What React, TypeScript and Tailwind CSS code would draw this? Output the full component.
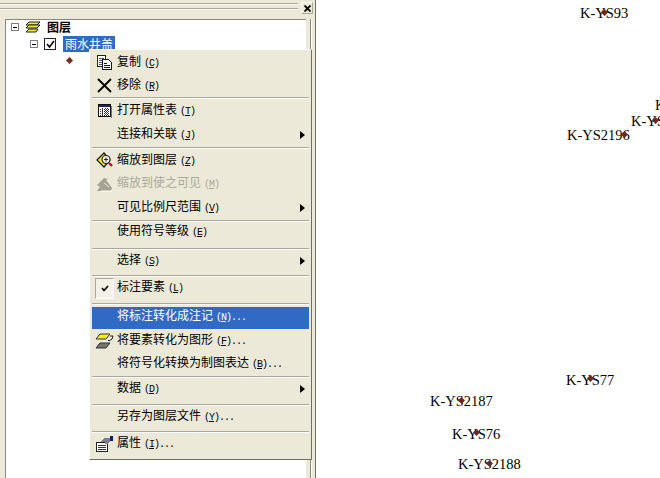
import React from 'react';

type Row = {
  label?: string;
  k?: string;
  dots?: boolean;
  size?: string;
  arrow?: boolean;
  icon?: React.ReactNode;
  disabled?: boolean;
  active?: boolean;
  checked?: boolean;
  sep?: boolean;
};

const CopyIcon = () => (
  <svg width="16" height="16" viewBox="0 0 16 16" shapeRendering="crispEdges">
    <path d="M0.5 0.5h8v4h-3v7h-5z" fill="#fff" stroke="#222" />
    <path d="M2 3h5M2 5h3M2 7h3M2 9h3" stroke="#555" />
    <path d="M5.5 4.5h6l3 3v7h-9z" fill="#fff" stroke="#10105a" />
    <path d="M7 8h3M7 10h6M7 12h6" stroke="#10105a" />
  </svg>
);

const RemoveIcon = () => (
  <svg width="15" height="15" viewBox="0 0 15 15">
    <path d="M1 1l13 13M14 1L1 14" stroke="#000" strokeWidth="1.8" />
  </svg>
);

const TableIcon = () => (
  <svg width="14" height="14" viewBox="0 0 14 14" shapeRendering="crispEdges">
    <rect x="0.5" y="0.5" width="12" height="12" fill="#fff" stroke="#111" />
    <rect x="1" y="1" width="11" height="2" fill="#20207a" />
    <path d="M2 5h9M2 7h9M2 9h9M2 11h9M4.5 4v8M7 4v8M9.5 4v8" stroke="#333" strokeDasharray="1 1" />
    <path d="M13.5 2v12H2" fill="none" stroke="#777" />
  </svg>
);

const ZoomIcon = () => (
  <svg width="18" height="17" viewBox="0 0 18 17">
    <path d="M8 1L1 8l7 7 6-7z" fill="#f8ec20" stroke="#111" strokeWidth="1.2" />
    <circle cx="10" cy="7.5" r="4" fill="#f4f4ea" stroke="#222" strokeWidth="1.2" />
    <path d="M8 7.5h4M10 5.5v4" stroke="#222" />
    <path d="M13 11l3 3" stroke="#b81010" strokeWidth="2.4" />
  </svg>
);

const ZoomDisabledIcon = () => (
  <svg width="17" height="15" viewBox="0 0 17 15">
    <path d="M8 1L1 8l3 2-3 4h14l1-3-6-8 2-1z" fill="#a5a294" />
    <path d="M8 6l5 4" stroke="#ece9d8" />
    <path d="M5 14h11" stroke="#fff" />
  </svg>
);

const ConvertIcon = () => (
  <svg width="19" height="16" viewBox="0 0 19 16">
    <path d="M5 1h10l-4 5H1z" fill="#f5ea2a" stroke="#333" />
    <path d="M5 10h10l-4 5H1z" fill="#77766c" stroke="#333" />
    <path d="M15 3h3l-1 3-3 2M13 7l1 1" fill="none" stroke="#222" />
  </svg>
);

const PropsIcon = () => (
  <svg width="17" height="16" viewBox="0 0 17 16" shapeRendering="crispEdges">
    <path d="M0.5 6.5h11v9h-11z" fill="#fff" stroke="#222" />
    <path d="M2 9h8M2 11h8M2 13h8" stroke="#333" />
    <path d="M4 6l5-4h5v4l-3 2H9V6z" fill="#7d7d86" />
    <rect x="14" y="0" width="3" height="5" fill="#16167a" />
  </svg>
);

const menu: Row[] = [
  { label: '复制', k: 'C', icon: <CopyIcon />, size: 'h-[23px]' },
  { label: '移除', k: 'R', icon: <RemoveIcon />, size: 'h-[23px]' },
  { sep: true },
  { label: '打开属性表', k: 'T', icon: <TableIcon />, size: 'h-[23px]' },
  { label: '连接和关联', k: 'J', arrow: true, size: 'h-[25px]' },
  { sep: true },
  { label: '缩放到图层', k: 'Z', icon: <ZoomIcon />, size: 'h-[23px]' },
  { label: '缩放到使之可见', k: 'M', icon: <ZoomDisabledIcon />, disabled: true, size: 'h-[24px]' },
  { label: '可见比例尺范围', k: 'V', arrow: true, size: 'h-[24px] pb-[1px]' },
  { sep: true },
  { label: '使用符号等级', k: 'E', size: 'h-[26px] pb-[6px]' },
  { sep: true },
  { label: '选择', k: 'S', arrow: true, size: 'h-[25px] pb-[4px]' },
  { sep: true },
  { label: '标注要素', k: 'L', checked: true, size: 'h-[26px] pb-[4px]' },
  { sep: true },
  { label: '将标注转化成注记', k: 'N', dots: true, active: true, size: 'h-[22px] mt-[2px] pb-[3px]' },
  { label: '将要素转化为图形', k: 'F', dots: true, icon: <ConvertIcon />, size: 'h-[24px]' },
  { label: '将符号化转换为制图表达', k: 'B', dots: true, size: 'h-[23px] pb-[1px]' },
  { sep: true },
  { label: '数据', k: 'D', arrow: true, size: 'h-[26px] pb-[4px]' },
  { sep: true },
  { label: '另存为图层文件', k: 'Y', dots: true, size: 'h-[25px] pb-[3px]' },
  { sep: true },
  { label: '属性', k: 'I', dots: true, icon: <PropsIcon />, size: 'h-[27px] pb-[5px]' },
];

const labels = [
  { text: 'K-YS93', x: 'left-[264px] top-[6px]', dot: 'left-[286px] top-[10px]' },
  { text: 'K-YS2196', x: 'left-[251px] top-[128px]', dot: 'left-[306px] top-[132px]' },
  { text: 'K-YS2', x: 'left-[315px] top-[114px]', dot: 'left-[337px] top-[118px]' },
  { text: 'K', x: 'left-[339px] top-[98px]', dot: 'hidden' },
  { text: 'K-YS77', x: 'left-[250px] top-[373px]', dot: 'left-[272px] top-[376px]' },
  { text: 'K-YS2187', x: 'left-[114px] top-[394px]', dot: 'left-[143px] top-[398px]' },
  { text: 'K-YS76', x: 'left-[136px] top-[427px]', dot: 'left-[158px] top-[430px]' },
  { text: 'K-YS2188', x: 'left-[142px] top-[457px]', dot: 'left-[171px] top-[461px]' },
];

function MenuRow({ row }: { row: Row }) {
  if (row.sep) {
    return <div className="h-[2px] mx-[2px] border-t border-b border-t-[#aca899] border-b-white" />;
  }
  const tone = row.active ? 'bg-[#316ac5] text-white' : row.disabled ? 'text-[#aca899]' : 'text-black';
  return (
    <div className={`flex items-center mx-[2px] ${row.size} ${tone}`}>
      <div className="w-[25px] shrink-0 flex items-center justify-center">
        {row.checked ? (
          <div className="w-[19px] h-[21px] flex items-center justify-center bg-[#f4f2e8] border border-t-[#aca899] border-l-[#aca899] border-r-white border-b-white">
            <svg width="8" height="7" viewBox="0 0 8 7">
              <path d="M1 3l2 2.5L7 1" fill="none" stroke="#000" strokeWidth="1.6" />
            </svg>
          </div>
        ) : (
          row.icon
        )}
      </div>
      <span className="mb-[2px] whitespace-nowrap">
        {row.label}
        <span className="ml-[3px] font-['Liberation_Mono',monospace] text-[10px] tracking-[-1px]">
          (<u>{row.k}</u>)
        </span>
        {row.dots && <span className="font-['Liberation_Mono',monospace] text-[10px] tracking-[-1px]">...</span>}
      </span>
      {row.arrow && (
        <div className="ml-auto mr-[4px] w-0 h-0 border-y-[4.5px] border-y-transparent border-l-[5px] border-l-black" />
      )}
    </div>
  );
}

export default function App() {
  return (
    <div className="relative flex w-[660px] h-[478px] overflow-hidden bg-white text-[12px] leading-none font-['Noto_Sans_CJK_SC','Liberation_Sans',sans-serif]">
      <div className="relative w-[316px] shrink-0 flex flex-col bg-[#ece9d8] border-r border-r-[#6f6d64]">
        <div className="h-[19px] shrink-0 flex items-start">
          <div className="w-[298px] mt-[3px] h-[7px] flex flex-col justify-between">
            <div className="h-[2px] border-t border-t-[#aca899] bg-[#f8f7f0]" />
            <div className="h-[2px] border-t border-t-[#aca899] bg-[#f8f7f0]" />
          </div>
          <div className="ml-[3px] mt-[2px] w-[12px] h-[12px] flex items-center justify-center border border-t-white border-l-white border-r-[#aca899] border-b-[#aca899] bg-[#ece9d8]">
            <svg width="7" height="7" viewBox="0 0 7 7">
              <path d="M0.5 0.5l6 6M6.5 0.5l-6 6" stroke="#000" strokeWidth="1.8" />
            </svg>
          </div>
        </div>
        <div className="flex flex-1 min-h-0">
          <div className="ml-[5px] w-[301px] bg-white border-t border-l border-t-[#8a887c] border-l-[#8a887c]">
            <div className="flex items-center h-[14px] ml-[5px]">
              <div className="w-[8px] h-[8px] border border-[#808080] flex items-center justify-center">
                <div className="w-[4px] h-px bg-black" />
              </div>
              <svg className="ml-[6px]" width="16" height="13" viewBox="0 0 16 13">
                <path d="M4 1h11l-3 3H1z" fill="#f5e82a" stroke="#222" />
                <path d="M4 4h11l-3 3H1z" fill="#f5e82a" stroke="#222" />
                <path d="M4 8h9l-2 3H1z" fill="#f5e82a" stroke="#222" />
              </svg>
              <span className="ml-[6px] font-bold text-black">图层</span>
            </div>
            <div className="flex items-center h-[16px] mt-[2px] ml-[24px]">
              <div className="w-[8px] h-[8px] border border-[#808080] flex items-center justify-center">
                <div className="w-[4px] h-px bg-black" />
              </div>
              <div className="ml-[6px] w-[12px] h-[12px] border border-[#222] flex items-center justify-center">
                <svg width="9" height="9" viewBox="0 0 9 9">
                  <path d="M1 4l2.5 3L8 1" fill="none" stroke="#000" strokeWidth="1.6" />
                </svg>
              </div>
              <span className="ml-[7px] h-[16px] px-[2px] flex items-center bg-[#316ac5] text-white">雨水井盖</span>
            </div>
            <div className="ml-[61px] mt-[6px] w-[5px] h-[5px] rotate-45 bg-[#7a2a1a]" />
          </div>
          <div className="flex-1 flex justify-end pr-[3px]">
            <div className="w-[2px] border-l border-l-[#8a887c] bg-white" />
          </div>
        </div>
        <div className="absolute left-[89px] top-[49px] w-[223px] h-[411px] pt-[1px] bg-[#ece9d8] border border-t-white border-l-white border-r-[#716f64] border-b-[#716f64]">
          {menu.map((row, i) => (
            <MenuRow key={i} row={row} />
          ))}
        </div>
      </div>
      <div className="relative flex-1 font-['Liberation_Serif',serif] text-[14.5px] text-black">
        {labels.map((l) => (
          <React.Fragment key={l.text}>
            <span className={`absolute leading-none whitespace-nowrap ${l.x}`}>{l.text}</span>
          </React.Fragment>
        ))}
        {labels.map((l) => (
          <div key={l.text} className={`absolute w-[5px] h-[5px] rotate-45 bg-[#6a2a20] ${l.dot}`} />
        ))}
      </div>
    </div>
  );
}
